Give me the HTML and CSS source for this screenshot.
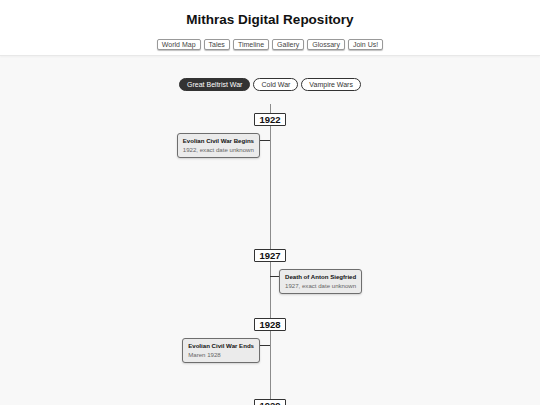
FILE: index.html
```html
<!DOCTYPE html>
<html>
<head>
    <meta charset="UTF-8">
    <title>Mithras Digital Repository</title>
    <link rel="stylesheet" href="styles.css">
</head>
<body>
<div class="header">
    <h1 class="title">Mithras Digital Repository</h1>
    <ul class="nav">
        <li>World Map</li>
        <li>Tales</li>
        <li>Timeline</li>
        <li>Gallery</li>
        <li>Glossary</li>
        <li>Join Us!</li>
    </ul>
</div>

<div class="main">
    <ul class="tabs">
        <li class="active">Great Beltrist War</li>
        <li>Cold War</li>
        <li>Vampire Wars</li>
    </ul>

    <div class="timeline">
        <div class="yearGroup" style="height:136px">
            <div class="year">1922</div>
            <div class="eventRow">
                <div class="card left">
                    <div class="cardTitle">Evolian Civil War Begins</div>
                    <div class="cardSub">1922, exact date unknown</div>
                </div>
            </div>
        </div>
        <div class="yearGroup" style="height:69px">
            <div class="year">1927</div>
            <div class="eventRow">
                <div class="card right">
                    <div class="cardTitle">Death of Anton Siegfried</div>
                    <div class="cardSub">1927, exact date unknown</div>
                </div>
            </div>
        </div>
        <div class="yearGroup" style="height:81px">
            <div class="year">1928</div>
            <div class="eventRow">
                <div class="card left">
                    <div class="cardTitle">Evolian Civil War Ends</div>
                    <div class="cardSub">Maren 1928</div>
                </div>
            </div>
        </div>
        <div class="yearGroup" style="height:60px">
            <div class="year">1929</div>
        </div>
    </div>
</div>
</body>
</html>
```

FILE: styles.css
```css
* {
    margin: 0;
    padding: 0;
    box-sizing: border-box;
    font-family: "Liberation Sans", Arial, Helvetica, sans-serif;
}

ul, li {
    list-style: none;
}

body {
    background: #f8f8f8;
    color: #222;
}

/* header */
.header {
    height: 56px;
    padding-top: 12px;
    background: #fff;
    border-bottom: 1px solid #e8e8e8;
    box-shadow: 0 1px 2px rgba(0, 0, 0, 0.04);
}

.title {
    font-size: 13.5px;
    line-height: 16px;
    font-weight: bold;
    text-align: center;
    color: #111;
}

.nav {
    display: flex;
    justify-content: center;
    gap: 3px;
    margin-top: 11px;
}

.nav li {
    padding: 0 4px;
    font-size: 7px;
    line-height: 9px;
    color: #444;
    background: #fff;
    border: 1px solid #999;
    border-radius: 2px;
    box-shadow: 0 1px 1px rgba(0, 0, 0, 0.25);
    cursor: pointer;
}

/* tabs */
.main {
    padding-top: 22px;
}

.tabs {
    display: flex;
    justify-content: center;
    gap: 3px;
}

.tabs li {
    padding: 0 7px;
    font-size: 7px;
    line-height: 11px;
    color: #333;
    background: #fff;
    border: 1px solid #333;
    border-radius: 8px;
    cursor: pointer;
}

.tabs li.active {
    background: #333;
    color: #fff;
}

/* timeline */
.timeline {
    position: relative;
    margin-top: 13px;
    padding-top: 9px;
}

.timeline::before {
    content: "";
    position: absolute;
    top: 0;
    bottom: 0;
    left: 270px;
    width: 1px;
    background: #8c8c8c;
}

.yearGroup {
    position: relative;
}

.year {
    position: relative;
    width: 32px;
    margin: 0 auto;
    font-size: 9.5px;
    line-height: 11px;
    font-weight: bold;
    text-align: center;
    color: #111;
    background: #fff;
    border: 1px solid #333;
    border-radius: 1px;
}

.eventRow {
    display: grid;
    grid-template-columns: 270px 270px;
    margin-top: 7px;
}

.card {
    position: relative;
    padding: 3px 5px;
    background: #ebebeb;
    border: 1px solid #6e6e6e;
    border-radius: 3px;
    box-shadow: 0 1px 2px rgba(0, 0, 0, 0.15);
}

.card.left {
    grid-column: 1;
    justify-self: end;
    margin-right: 10px;
}

.card.right {
    grid-column: 2;
    justify-self: start;
    margin-left: 9px;
}

.card::after {
    content: "";
    position: absolute;
    top: 6px;
    height: 1px;
    background: #333;
}

.card.left::after {
    right: -11px;
    width: 10px;
}

.card.right::after {
    left: -10px;
    width: 9px;
}

.cardTitle {
    font-size: 6.1px;
    line-height: 8px;
    font-weight: bold;
    color: #111;
    white-space: nowrap;
}

.cardSub {
    margin-top: 1px;
    font-size: 6.1px;
    line-height: 8px;
    color: #666;
    white-space: nowrap;
}
```
